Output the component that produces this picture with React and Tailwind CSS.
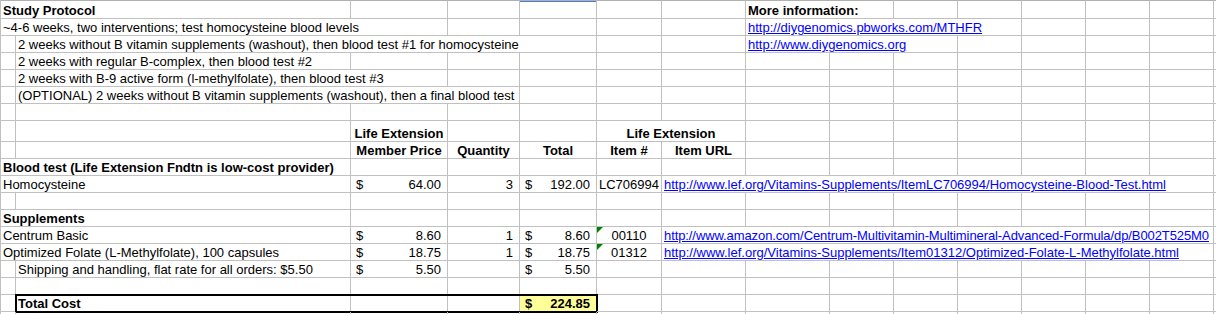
import clsx from "clsx";

const GRID =
  "grid grid-cols-[15px_335px_97px_72px_77px_65px_84px_84px_64px_64px_64px_64px_64px_64px_1fr]";

const SPAN = {
  1: "col-span-1",
  2: "col-span-2",
  3: "col-span-3",
  4: "col-span-4",
  8: "col-span-8",
};

const Money = ({ v }) => (
  <div className="flex w-full justify-between pl-[3px] pr-[4px]">
    <span>$</span>
    <span>{v}</span>
  </div>
);

const Link = ({ children, className }) => (
  <span className={clsx("text-[#0000ff] underline", className)}>{children}</span>
);

const Tri = () => (
  <span className="absolute left-0 top-0 h-0 w-0 border-t-[6px] border-r-[6px] border-t-[#008000] border-r-transparent" />
);

const Cell = ({ span = 1, last, className, children }) => (
  <div
    className={clsx(
      SPAN[span],
      "flex items-end whitespace-nowrap border-b border-[#c0c0c0] px-[2px] leading-[15px]",
      !last && "border-r",
      className
    )}
  >
    {children}
  </div>
);

const Row = ({ h = "h-[17px]", top, cells = [] }) => {
  const used = cells.reduce((n, c) => n + (c.span || 1), 0);
  const all = [...cells, ...Array.from({ length: 15 - used }, () => ({}))];
  return (
    <div className={clsx(GRID, h)}>
      {all.map((c, i) => (
        <Cell
          key={i}
          span={c.span}
          last={i === all.length - 1}
          className={clsx(top && "border-t border-t-[#b0b0b0]", c.className)}
        >
          {c.children}
        </Cell>
      ))}
    </div>
  );
};

const head = (text) => ({ className: "justify-center font-bold", children: text });
const money = (v) => ({ children: <Money v={v} /> });
const num = (v) => ({ className: "justify-end pr-[6px]", children: v });
const item = (v, tri) => ({
  className: "relative justify-center",
  children: (
    <>
      {tri && <Tri />}
      {v}
    </>
  ),
});

export default function App() {
  return (
    <div className="h-[314px] w-[1216px] overflow-hidden border-l border-[#c0c0c0] bg-white font-['Liberation_Sans',Arial,sans-serif] text-[13px] text-black">
      <Row
        h="h-[19px]"
        top
        cells={[
          { span: 2, className: "font-bold", children: "Study Protocol" },
          {},
          {},
          { className: "border-t-[#4a7bd6] shadow-[inset_0_1px_0_#4a7bd6]" },
          {},
          {},
          { span: 2, className: "font-bold", children: "More information:" },
        ]}
      />
      <Row
        cells={[
          { span: 3, children: "~4-6 weeks, two interventions; test homocysteine blood levels" },
          {},
          {},
          {},
          {},
          { span: 4, children: <Link>http://diygenomics.pbworks.com/MTHFR</Link> },
        ]}
      />
      <Row
        cells={[
          {},
          {
            span: 4,
            children: "2 weeks without B vitamin supplements (washout), then blood test #1 for homocysteine",
          },
          {},
          {},
          { span: 3, children: <Link>http://www.diygenomics.org</Link> },
        ]}
      />
      <Row cells={[{}, { children: "2 weeks with regular B-complex, then blood test #2" }]} />
      <Row
        cells={[{}, { span: 2, children: "2 weeks with B-9 active form (l-methylfolate), then blood test #3" }]}
      />
      <Row
        cells={[
          {},
          {
            span: 3,
            children: "(OPTIONAL) 2 weeks without B vitamin supplements (washout), then a final blood test",
          },
        ]}
      />
      <Row />
      <Row
        h="h-[21px]"
        cells={[{}, {}, head("Life Extension"), {}, {}, { ...head("Life Extension"), span: 2 }]}
      />
      <Row
        cells={[{}, {}, head("Member Price"), head("Quantity"), head("Total"), head("Item #"), head("Item URL")]}
      />
      <Row
        cells={[
          { span: 2, className: "font-bold", children: "Blood test (Life Extension Fndtn is low-cost provider)" },
        ]}
      />
      <Row
        cells={[
          { span: 2, children: "Homocysteine" },
          money("64.00"),
          num("3"),
          money("192.00"),
          item("LC706994"),
          {
            span: 8,
            children: (
              <Link>http://www.lef.org/Vitamins-Supplements/ItemLC706994/Homocysteine-Blood-Test.html</Link>
            ),
          },
        ]}
      />
      <Row />
      <Row cells={[{ span: 2, className: "font-bold", children: "Supplements" }]} />
      <Row
        cells={[
          { span: 2, children: "Centrum Basic" },
          money("8.60"),
          num("1"),
          money("8.60"),
          item("00110", true),
          {
            span: 8,
            className: "overflow-hidden",
            children: (
              <Link className="tracking-[-0.09px]">
                http://www.amazon.com/Centrum-Multivitamin-Multimineral-Advanced-Formula/dp/B002T525M0
              </Link>
            ),
          },
        ]}
      />
      <Row
        cells={[
          { span: 2, children: "Optimized Folate (L-Methylfolate), 100 capsules" },
          money("18.75"),
          num("1"),
          money("18.75"),
          item("01312", true),
          {
            span: 8,
            children: (
              <Link>http://www.lef.org/Vitamins-Supplements/Item01312/Optimized-Folate-L-Methylfolate.html</Link>
            ),
          },
        ]}
      />
      <Row
        cells={[
          {},
          { children: "Shipping and handling, flat rate for all orders: $5.50" },
          money("5.50"),
          {},
          money("5.50"),
        ]}
      />
      <Row />

      {/* Total Cost row, thick box across B:E */}
      <div className={clsx(GRID, "h-[17px]")}>
        <Cell />
        <div className="col-span-4 grid grid-cols-[335px_97px_72px_77px] outline-2 outline-offset-[-1px] outline-solid outline-black">
          <Cell className="font-bold">Total Cost</Cell>
          <Cell />
          <Cell />
          <Cell className="bg-[#ffff99] font-bold">
            <Money v="224.85" />
          </Cell>
        </div>
        {Array.from({ length: 10 }, (_, i) => (
          <Cell key={i} last={i === 9} />
        ))}
      </div>
      <Row />
    </div>
  );
}
